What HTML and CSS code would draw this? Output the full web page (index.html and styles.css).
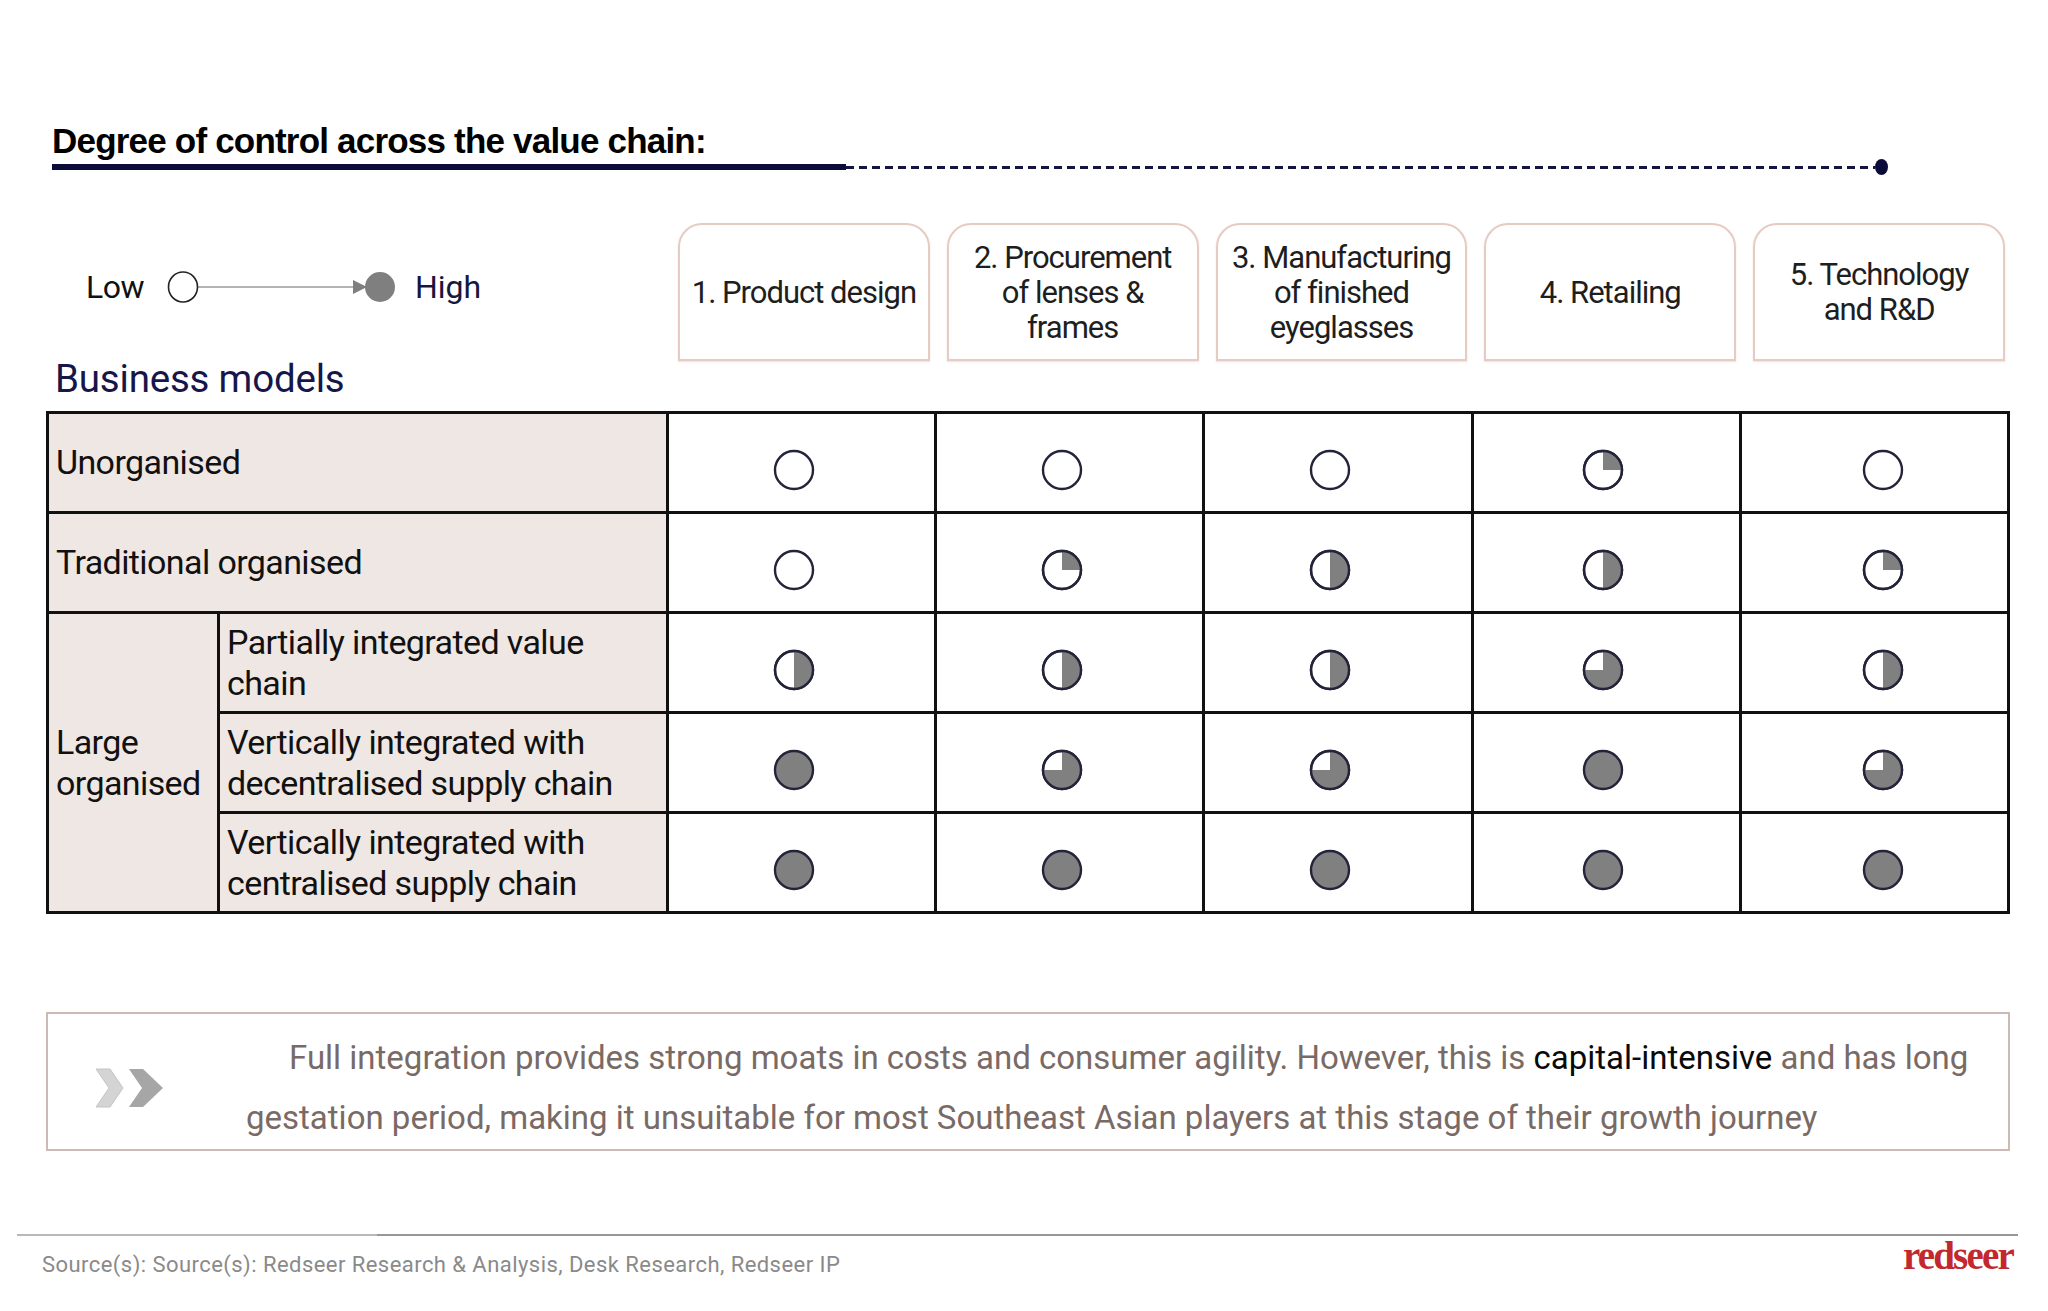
FILE: index.html
```html
<!DOCTYPE html>
<html lang="en">
<head>
<meta charset="utf-8">
<title>Degree of control across the value chain</title>
<link rel="stylesheet" href="styles.css">
</head>
<body>
<div class="page">
  <header class="title-block">
    <h1 class="title">Degree of control across the value chain:</h1>
    <div class="rule"><span class="rule-solid"></span><span class="rule-dash"></span><span class="rule-dot"></span></div>
  </header>

  <section class="matrix">
    <div class="head">
      <div class="head-left">
        <div class="legend">
          <span class="legend-low">Low</span>
          <svg class="legend-scale" width="232" height="40" viewBox="0 0 232 40">
            <line x1="32" y1="20" x2="200" y2="20" stroke="#b4b4b4" stroke-width="2"/>
            <polygon points="187,13 201,20 187,27" fill="#7f7f7f"/>
            <ellipse cx="17" cy="20" rx="14.5" ry="15" fill="#fff" stroke="#222" stroke-width="1.6"/>
            <circle cx="214" cy="20" r="15" fill="#7f7f7f"/>
          </svg>
          <span class="legend-high">High</span>
        </div>
        <h2 class="bm">Business models</h2>
      </div>
      <div class="stage"><div class="stage-box">1. Product design</div></div>
      <div class="stage"><div class="stage-box">2. Procurement<br>of lenses &amp;<br>frames</div></div>
      <div class="stage"><div class="stage-box">3. Manufacturing<br>of finished<br>eyeglasses</div></div>
      <div class="stage"><div class="stage-box">4. Retailing</div></div>
      <div class="stage"><div class="stage-box">5. Technology<br>and R&amp;D</div></div>
    </div>

    <table class="grid">
      <colgroup>
        <col class="c-a"><col class="c-b"><col><col><col><col><col>
      </colgroup>
      <tr>
        <th class="lbl" colspan="2">Unorganised</th>
        <td class="k1"><svg class="hb" viewBox="0 0 44 44"><circle cx="22" cy="22" r="19" class="ring"/></svg></td>
        <td class="k2"><svg class="hb" viewBox="0 0 44 44"><circle cx="22" cy="22" r="19" class="ring"/></svg></td>
        <td class="k3"><svg class="hb" viewBox="0 0 44 44"><circle cx="22" cy="22" r="19" class="ring"/></svg></td>
        <td class="k4"><svg class="hb" viewBox="0 0 44 44"><circle cx="22" cy="22" r="19" class="ring"/><path class="fill" d="M22 22 L22 3 A19 19 0 0 1 41 22 Z"/><circle cx="22" cy="22" r="19" class="edge"/></svg></td>
        <td class="k5"><svg class="hb" viewBox="0 0 44 44"><circle cx="22" cy="22" r="19" class="ring"/></svg></td>
      </tr>
      <tr>
        <th class="lbl" colspan="2">Traditional organised</th>
        <td class="k1"><svg class="hb" viewBox="0 0 44 44"><circle cx="22" cy="22" r="19" class="ring"/></svg></td>
        <td class="k2"><svg class="hb" viewBox="0 0 44 44"><circle cx="22" cy="22" r="19" class="ring"/><path class="fill" d="M22 22 L22 3 A19 19 0 0 1 41 22 Z"/><circle cx="22" cy="22" r="19" class="edge"/></svg></td>
        <td class="k3"><svg class="hb" viewBox="0 0 44 44"><circle cx="22" cy="22" r="19" class="ring"/><path class="fill" d="M22 3 A19 19 0 0 1 22 41 Z"/><circle cx="22" cy="22" r="19" class="edge"/></svg></td>
        <td class="k4"><svg class="hb" viewBox="0 0 44 44"><circle cx="22" cy="22" r="19" class="ring"/><path class="fill" d="M22 3 A19 19 0 0 1 22 41 Z"/><circle cx="22" cy="22" r="19" class="edge"/></svg></td>
        <td class="k5"><svg class="hb" viewBox="0 0 44 44"><circle cx="22" cy="22" r="19" class="ring"/><path class="fill" d="M22 22 L22 3 A19 19 0 0 1 41 22 Z"/><circle cx="22" cy="22" r="19" class="edge"/></svg></td>
      </tr>
      <tr>
        <th class="lbl group" rowspan="3">Large<br>organised</th>
        <th class="lbl">Partially integrated value<br>chain</th>
        <td class="k1"><svg class="hb" viewBox="0 0 44 44"><circle cx="22" cy="22" r="19" class="ring"/><path class="fill" d="M22 3 A19 19 0 0 1 22 41 Z"/><circle cx="22" cy="22" r="19" class="edge"/></svg></td>
        <td class="k2"><svg class="hb" viewBox="0 0 44 44"><circle cx="22" cy="22" r="19" class="ring"/><path class="fill" d="M22 3 A19 19 0 0 1 22 41 Z"/><circle cx="22" cy="22" r="19" class="edge"/></svg></td>
        <td class="k3"><svg class="hb" viewBox="0 0 44 44"><circle cx="22" cy="22" r="19" class="ring"/><path class="fill" d="M22 3 A19 19 0 0 1 22 41 Z"/><circle cx="22" cy="22" r="19" class="edge"/></svg></td>
        <td class="k4"><svg class="hb" viewBox="0 0 44 44"><circle cx="22" cy="22" r="19" class="ring"/><path class="fill" d="M22 22 L22 3 A19 19 0 1 1 3 22 Z"/><circle cx="22" cy="22" r="19" class="edge"/></svg></td>
        <td class="k5"><svg class="hb" viewBox="0 0 44 44"><circle cx="22" cy="22" r="19" class="ring"/><path class="fill" d="M22 3 A19 19 0 0 1 22 41 Z"/><circle cx="22" cy="22" r="19" class="edge"/></svg></td>
      </tr>
      <tr>
        <th class="lbl">Vertically integrated with<br>decentralised supply chain</th>
        <td class="k1"><svg class="hb" viewBox="0 0 44 44"><circle cx="22" cy="22" r="19" class="ring full"/></svg></td>
        <td class="k2"><svg class="hb" viewBox="0 0 44 44"><circle cx="22" cy="22" r="19" class="ring"/><path class="fill" d="M22 22 L22 3 A19 19 0 1 1 3 22 Z"/><circle cx="22" cy="22" r="19" class="edge"/></svg></td>
        <td class="k3"><svg class="hb" viewBox="0 0 44 44"><circle cx="22" cy="22" r="19" class="ring"/><path class="fill" d="M22 22 L22 3 A19 19 0 1 1 3 22 Z"/><circle cx="22" cy="22" r="19" class="edge"/></svg></td>
        <td class="k4"><svg class="hb" viewBox="0 0 44 44"><circle cx="22" cy="22" r="19" class="ring full"/></svg></td>
        <td class="k5"><svg class="hb" viewBox="0 0 44 44"><circle cx="22" cy="22" r="19" class="ring"/><path class="fill" d="M22 22 L22 3 A19 19 0 1 1 3 22 Z"/><circle cx="22" cy="22" r="19" class="edge"/></svg></td>
      </tr>
      <tr>
        <th class="lbl">Vertically integrated with<br>centralised supply chain</th>
        <td class="k1"><svg class="hb" viewBox="0 0 44 44"><circle cx="22" cy="22" r="19" class="ring full"/></svg></td>
        <td class="k2"><svg class="hb" viewBox="0 0 44 44"><circle cx="22" cy="22" r="19" class="ring full"/></svg></td>
        <td class="k3"><svg class="hb" viewBox="0 0 44 44"><circle cx="22" cy="22" r="19" class="ring full"/></svg></td>
        <td class="k4"><svg class="hb" viewBox="0 0 44 44"><circle cx="22" cy="22" r="19" class="ring full"/></svg></td>
        <td class="k5"><svg class="hb" viewBox="0 0 44 44"><circle cx="22" cy="22" r="19" class="ring full"/></svg></td>
      </tr>
    </table>
  </section>

  <div class="callout">
    <svg class="chevrons" width="68" height="40" viewBox="0 0 68 40">
      <polygon points="0,1 14,1 27,20 14,39 0,39 13,20" fill="#d4d4d4" stroke="#c4c4c4" stroke-width="1"/>
      <polygon points="33,1 47,1 67,20 47,39 33,39 46,20" fill="#a6a6a6"/>
    </svg>
    <p class="callout-text"><span class="ln1">Full integration provides strong moats in costs and consumer agility. However, this is <span class="em">capital-intensive</span> and has long</span><br><span class="ln2">gestation period, making it unsuitable for most Southeast Asian players at this stage of their growth journey</span></p>
  </div>

  <footer class="footer">
    <div class="footer-rule"></div>
    <div class="footer-row">
      <span class="source">Source(s): Source(s): Redseer Research &amp; Analysis, Desk Research, Redseer IP</span>
      <span class="logo">redseer</span>
    </div>
  </footer>
</div>
</body>
</html>
```

FILE: styles.css
```css
* { box-sizing: border-box; }
html, body { margin: 0; padding: 0; background: #fff; }
body { font-family: Roboto, "Liberation Sans", Arial, sans-serif; color: #111; }

.page { width: 2048px; height: 1311px; overflow: hidden; position: relative; }

/* title */
.title-block { padding: 123px 0 0 52px; width: 1888px; }
.title {
  margin: 0;
  font-family: "Liberation Sans", Arial, sans-serif;
  font-weight: 700;
  font-size: 35px;
  letter-spacing: -0.8px;
  line-height: 36px;
  color: #000;
}
.rule { display: flex; align-items: center; height: 16px; }
.rule-solid { width: 794px; height: 6px; background: #0c0c3a; }
.rule-dash {
  flex: 1;
  height: 3px;
  background: linear-gradient(to right, #14143e 0 8px, transparent 8px 13px);
  background-size: 13px 3px;
}
.rule-dot { width: 13px; height: 16px; border-radius: 50%; background: #0c0c3a; }

/* matrix */
.matrix { margin: 48px 38px 0 46px; }
.head {
  display: grid;
  grid-template-columns: 620px repeat(5, 1fr);
  height: 188px;
}
.head-left { padding: 44px 0 10px 40px; display: flex; flex-direction: column; }
.legend { display: flex; align-items: center; height: 40px; font-size: 32px; letter-spacing: -0.5px; }
.legend-low { color: #111; width: 80px; }
.legend-scale { display: block; }
.legend-high { color: #16163e; margin-left: 17px; letter-spacing: 0; }
.bm {
  margin: 50px 0 0 -31px;
  font-weight: 400;
  font-size: 38.5px;
  line-height: 44px;
  letter-spacing: -0.2px;
  color: #16164a;
}
.stage { padding: 0 5px 0 12px; }
.stage-box {
  height: 138px;
  border: 2px solid #e6cbc2;
  border-radius: 24px 24px 0 0;
  box-shadow: 0 1px 2px rgba(200,170,160,0.35);
  display: flex;
  align-items: center;
  justify-content: center;
  text-align: center;
  font-size: 31px;
  letter-spacing: -1px;
  line-height: 35px;
  color: #1e1e1e;
}

/* table */
.grid {
  border-collapse: collapse;
  width: 1964px;
  table-layout: fixed;
}
.c-a { width: 171px; }
.c-b { width: 449px; }
.grid th, .grid td {
  border: 3px solid #111;
  height: 100px;
  padding: 0;
}
.lbl {
  background: #efe7e4;
  text-align: left;
  font-weight: 400;
  font-size: 34px;
  letter-spacing: -0.6px;
  line-height: 41px;
  color: #111;
  padding: 0 0 0 7px !important;
  vertical-align: middle;
}
.grid td { text-align: center; vertical-align: middle; padding-top: 14px; }
.grid td.k1, .grid td.k2, .grid td.k3 { padding-right: 16px; }
.grid td.k4 { padding-right: 6px; }
.grid td.k5 { padding-left: 18px; }
.hb { width: 44px; height: 44px; display: block; margin: 0 auto; }
.ring { fill: #fff; stroke: #23233a; stroke-width: 2.4; }
.ring.full { fill: #808080; }
.fill { fill: #808080; }
.edge { fill: none; stroke: #23233a; stroke-width: 2.4; }

/* callout */
.callout {
  margin: 98px 38px 0 46px;
  height: 139px;
  border: 2px solid #cdbab5;
  display: flex;
  align-items: flex-start;
}
.chevrons { flex: none; margin: 54px 0 0 48px; display: block; }
.callout-text {
  margin: 14px 0 0 82px;
  font-size: 33px;
  letter-spacing: 0;
  line-height: 60px;
  color: #7a6a66;
  text-indent: 43px;
  white-space: nowrap;
}
.em { color: #0a0a0a; }

/* footer */
.footer { margin-top: 83px; }
.footer-rule {
  margin: 0 30px 0 17px;
  height: 2px;
  background: linear-gradient(to right, #b8b8b8 0 360px, #979797 360px);
}
.footer-row {
  display: flex;
  justify-content: space-between;
  align-items: flex-start;
  padding: 0 35px 0 42px;
}
.source {
  margin-top: 16px;
  font-size: 22px;
  line-height: 26px;
  color: #8a8a8a;
  letter-spacing: 0.45px;
}
.logo {
  margin-top: 2px;
  font-family: "Liberation Serif", "Times New Roman", serif;
  font-weight: 700;
  font-size: 39px;
  line-height: 36px;
  letter-spacing: -1.8px;
  color: #c3282f;
}
```
